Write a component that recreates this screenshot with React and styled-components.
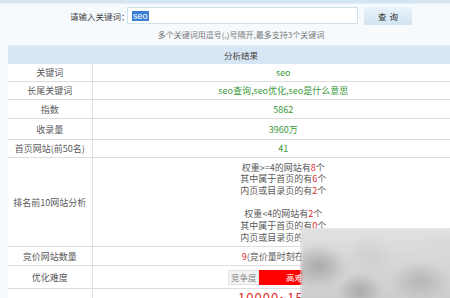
import React from "react";
import styled, { createGlobalStyle } from "styled-components";

const Global = createGlobalStyle`
  html, body { margin: 0; padding: 0; overflow: hidden; }
  body {
    background: #f6fafd;
    font-family: "Noto Sans CJK SC", "Liberation Sans", sans-serif;
    font-size: 9px;
    color: #555;
    width: 450px;
    height: 298px;
    position: relative;
  }
`;

const TopStrip = styled.div`
  height: 3px;
  background: #d3e5f3;
  border-bottom: 1px solid #e4eef7;
`;

const SearchRow = styled.div`
  display: flex;
  align-items: center;
  padding: 2px 0 0 70px;
  height: 19px;
`;

const Label = styled.span`
  width: 57px;
  font-size: 8.5px;
  color: #444;
  white-space: nowrap;
`;

const InputBox = styled.div`
  background: #fff;
  border: 1px solid #d2e0ea;
  display: flex;
  align-items: center;
  padding-left: 4px;
  box-sizing: border-box;
  width: 231px;
  height: 17px;
`;

const Selected = styled.span`
  background: #3a7fd5;
  color: #fff;
  font-family: "Liberation Sans", sans-serif;
  font-size: 9px;
  line-height: 10px;
  padding: 0 1px;
`;

const Button = styled.div`
  margin-left: 6px;
  width: 48px;
  height: 18px;
  background: linear-gradient(#e9f3fa, #d2e4f1);
  border-radius: 1px;
  display: flex;
  align-items: center;
  justify-content: center;
  font-size: 8.5px;
  color: #333;
  letter-spacing: 3px;
  text-indent: 3px;
`;

const Hint = styled.div`
  text-align: center;
  font-size: 8px;
  color: #777;
  height: 20px;
  line-height: 20px;
  width: 482px;
`;

const Table = styled.table`
  margin-left: 8px;
  width: 466px;
  border-collapse: collapse;
  table-layout: fixed;
  background: #fff;
  line-height: 11px;
`;

const HeadCell = styled.th`
  height: 18px;
  background: #d6e6f5;
  border-top: 1px solid #e3eef8;
  font-weight: normal;
  color: #444;
  font-size: 8.5px;
  text-align: center;
  padding: 0;
`;

const Row = styled.tr`
  border-bottom: 1px solid #dedede;
`;

const Key = styled.td`
  height: ${(p) => p.$h || 17}px;
  border-right: 1px solid #d8e2ea;
  text-align: center;
  color: #5a5a5a;
  padding: 0;
  white-space: nowrap;
`;

const Val = styled.td`
  text-align: center;
  vertical-align: ${(p) => (p.$top ? "top" : "middle")};
  color: ${(p) => p.$color || "#5a5a5a"};
  padding: 0;
  white-space: nowrap;
`;

const Lines = styled.div`
  display: flex;
  flex-direction: column;
  align-items: center;
  line-height: 11.7px;
  color: #5a5a5a;
  padding: 2px 0 1px;
`;

const Red = styled.span`
  color: #e02a2a;
`;

const Gap = styled.div`
  height: 11.7px;
`;

const Difficulty = styled.div`
  display: inline-flex;
  align-items: stretch;
  height: 15px;
  vertical-align: middle;
`;

const DiffLabel = styled.span`
  width: 31px;
  background: #f3f3f3;
  border: 1px solid #e2e2e2;
  box-sizing: border-box;
  color: #888;
  display: flex;
  align-items: center;
  justify-content: center;
  font-size: 8.5px;
`;

const DiffBar = styled.span`
  width: 79px;
  background: #f00;
  color: #fff;
  display: flex;
  align-items: center;
  justify-content: center;
  font-size: 8.5px;
`;

const BigRed = styled.span`
  display: inline-block;
  margin-top: 2px;
  color: #e02a2a;
  font-size: 13px;
  line-height: 14px;
  letter-spacing: 1px;
`;

const Mosaic = styled.div`
  position: absolute;
  left: 300px;
  top: 226px;
  width: 160px;
  height: 80px;
  background:
    radial-gradient(ellipse 30px 22px at 18px 40px, #a8a8a8, transparent),
    radial-gradient(ellipse 26px 20px at 70px 30px, #cfcfcf, transparent),
    radial-gradient(ellipse 30px 20px at 120px 55px, #b5b5b5, transparent),
    radial-gradient(ellipse 22px 18px at 60px 65px, #a9a9a9, transparent),
    radial-gradient(ellipse 24px 16px at 140px 20px, #d8d8d8, transparent),
    linear-gradient(#e2e2e2, #cacaca);
  filter: blur(2px);
  clip-path: inset(2px 0 0 0);
`;

export default function App() {
  return (
    <>
      <Global />
      <TopStrip />
      <SearchRow>
        <Label>请输入关键词：</Label>
        <InputBox>
          <Selected>seo</Selected>
        </InputBox>
        <Button>查询</Button>
      </SearchRow>
      <Hint>多个关键词用逗号(,)号隔开,最多支持3个关键词</Hint>
      <Table>
        <colgroup>
          <col style={{ width: 84 }} />
          <col />
        </colgroup>
        <thead>
          <tr>
            <HeadCell colSpan={2}>分析结果</HeadCell>
          </tr>
        </thead>
        <tbody>
          <Row>
            <Key>关键词</Key>
            <Val $color="#3a9a3a">seo</Val>
          </Row>
          <Row>
            <Key>长尾关键词</Key>
            <Val $color="#3a9a3a">seo查询,seo优化,seo是什么意思</Val>
          </Row>
          <Row>
            <Key $h={18}>指数</Key>
            <Val $color="#3a9a3a">5862</Val>
          </Row>
          <Row>
            <Key $h={20}>收录量</Key>
            <Val $color="#3a9a3a">3960万</Val>
          </Row>
          <Row>
            <Key $h={17}>首页网站(前50名)</Key>
            <Val $color="#3a9a3a">41</Val>
          </Row>
          <Row>
            <Key $h={88}>排名前10网站分析</Key>
            <Val>
              <Lines>
                <span>权重&gt;=4的网站有<Red>8</Red>个</span>
                <span>其中属于首页的有<Red>6</Red>个</span>
                <span>内页或目录页的有<Red>2</Red>个</span>
                <Gap />
                <span>权重&lt;4的网站有<Red>2</Red>个</span>
                <span>其中属于首页的有<Red>0</Red>个</span>
                <span>内页或目录页的有<Red>2</Red>个</span>
              </Lines>
            </Val>
          </Row>
          <Row>
            <Key $h={18}>竞价网站数量</Key>
            <Val><Red>9</Red>(竞价量时刻在变化)</Val>
          </Row>
          <Row>
            <Key $h={22}>优化难度</Key>
            <Val>
              <Difficulty>
                <DiffLabel>竞争度</DiffLabel>
                <DiffBar>高难度</DiffBar>
              </Difficulty>
            </Val>
          </Row>
          <Row>
            <Key $h={30}>预估流量</Key>
            <Val $top><BigRed>10000~15000</BigRed></Val>
          </Row>
        </tbody>
      </Table>
      <Mosaic />
    </>
  );
}
